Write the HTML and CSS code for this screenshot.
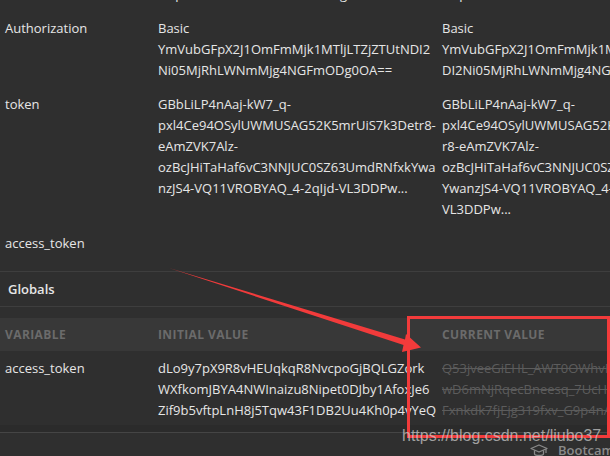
FILE: index.html
```html
<!DOCTYPE html>
<html>
<head>
<meta charset="utf-8">
<link rel="stylesheet" href="styles.css">
</head>
<body>
<div class="page">
  <div class="env">
    <div class="row">
      <div class="cell">url</div>
      <div class="cell">http://localhost:8080/oauth/login</div>
      <div class="cell">http://localhost:8080/oauth/login</div>
    </div>
    <div class="row">
      <div class="cell">Authorization</div>
      <div class="cell">Basic<br>YmVubGFpX2J1OmFmMjk1MTljLTZjZTUtNDI2<br>Ni05MjRhLWNmMjg4NGFmODg0OA==</div>
      <div class="cell">Basic<br>YmVubGFpX2J1OmFmMjk1MTljLTZjZTUtN<br>DI2Ni05MjRhLWNmMjg4NGFmODg0OA==</div>
    </div>
    <div class="row">
      <div class="cell">token</div>
      <div class="cell">GBbLiLP4nAaj-kW7_q-<br>pxl4Ce94OSylUWMUSAG52K5mrUiS7k3Detr8-<br>eAmZVK7Alz-<br>ozBcJHiTaHaf6vC3NNJUC0SZ63UmdRNfxkYwa<br>nzJS4-VQ11VROBYAQ_4-2qIjd-VL3DDPw...</div>
      <div class="cell">GBbLiLP4nAaj-kW7_q-<br>pxl4Ce94OSylUWMUSAG52K5mrUiS7k3Det<br>r8-eAmZVK7Alz-<br>ozBcJHiTaHaf6vC3NNJUC0SZ63UmdRNfxk<br>YwanzJS4-VQ11VROBYAQ_4-2qIjd-<br>VL3DDPw...</div>
    </div>
    <div class="row">
      <div class="cell">access_token</div>
      <div class="cell"></div>
      <div class="cell"></div>
    </div>
  </div>

  <div class="section-title">Globals</div>

  <div class="globals">
    <div class="head">
      <div>Variable</div>
      <div>Initial value</div>
      <div>Current value</div>
    </div>
    <div class="grow">
      <div class="cell">access_token</div>
      <div class="cell">dLo9y7pX9R8vHEUqkqR8NvcpoGjBQLGZork<br>WXfkomJBYA4NWInaizu8Nipet0DJby1AfoxJe6<br>Zif9b5vftpLnH8j5Tqw43F1DB2Uu4Kh0p4vYeQ<br>a7ubcsoz9v1rkdc4zhpq2Xlbr8vm</div>
      <div class="cell struck">Q53jveeGiEHL_AWT0OWhvFr2kXq<br>wD6mNjRqecBneesq_7UcHiz3Vm<br>Fxnkdk7fjEjg319fxv_G9p4nAqL<br>ua0rT8skpW2mNb</div>
    </div>
  </div>
  <div class="footer-line"></div>
  <div class="footer">
    <svg class="cap" width="18" height="13" viewBox="0 0 18 13">
      <path d="M1 4.5 L9 1 L17 4.5 L9 8 Z" fill="none" stroke="#8a8a8a" stroke-width="1.3" stroke-linejoin="round"/>
      <path d="M4.5 6.2 V9.8 C4.5 12 13.5 12 13.5 9.8 V6.2" fill="none" stroke="#8a8a8a" stroke-width="1.3"/>
      <path d="M16 5 V9" stroke="#8a8a8a" stroke-width="1.2"/>
    </svg>
    <span class="boot">Bootcamp</span>
  </div>

  <svg class="marks" width="610" height="456" viewBox="0 0 610 456">
    <polygon points="169,268 405,339.5 406,334 421,347.5 402,352 403.5,345" fill="#f23b3b"/>
    <rect x="408.5" y="317.5" width="200" height="119" fill="none" stroke="#f23b3b" stroke-width="3"/>
  </svg>
  <div class="watermark">https://blog.csdn.net/liubo37</div>
</div>
</body>
</html>
```

FILE: styles.css
```css
html, body {
  margin: 0;
  padding: 0;
}
body {
  width: 610px;
  height: 456px;
  overflow: hidden;
  background: #2f2f2f;
  font-family: "Open Sans", "DejaVu Sans", sans-serif;
  font-size: 13px;
  color: #e6e6e6;
}
.page {
  position: relative;
  width: 610px;
  height: 456px;
  overflow: hidden;
}
.env {
  margin-top: -22px;
  padding-bottom: 10px;
  border-bottom: 1px solid #3e3e3e;
}
.row, .grow, .head {
  display: grid;
  grid-template-columns: 158px 284px 400px;
  white-space: nowrap;
}
.row {
  padding: 6px 0 7px;
  line-height: 21px;
}
.cell:first-child, .head > div:first-child {
  padding-left: 5px;
}
.section-title {
  height: 34px;
  line-height: 34px;
  padding-left: 8px;
  font-weight: 600;
  border-bottom: 1px solid #3e3e3e;
}
.globals {
  margin-top: 11px;
}
.head {
  height: 33px;
  line-height: 33px;
  background: #383838;
  color: #6b6b6b;
  font-size: 12px;
  font-weight: 700;
  letter-spacing: 0.4px;
  text-transform: uppercase;
}
.grow {
  height: 74px;
  overflow: hidden;
  padding-top: 7px;
  box-sizing: border-box;
  line-height: 21px;
}
.struck {
  color: #5c5c5c;
  text-decoration: line-through;
}
.footer-line {
  height: 7px;
  background: #2b2b2b;
  border-bottom: 1px solid #454545;
}
.footer {
  display: flex;
  align-items: center;
  gap: 10px;
  padding-left: 530px;
  padding-top: 8px;
  white-space: nowrap;
}
.cap {
  flex: none;
}
.boot {
  color: #8a8a8a;
  font-weight: 600;
  font-size: 13px;
}
.marks {
  position: absolute;
  left: 0;
  top: 0;
  pointer-events: none;
}
.watermark {
  position: absolute;
  left: 402px;
  top: 427px;
  font-family: "Liberation Sans", Arial, sans-serif;
  font-size: 16px;
  line-height: 18px;
  color: rgba(205, 205, 205, 0.72);
  white-space: nowrap;
}
```
